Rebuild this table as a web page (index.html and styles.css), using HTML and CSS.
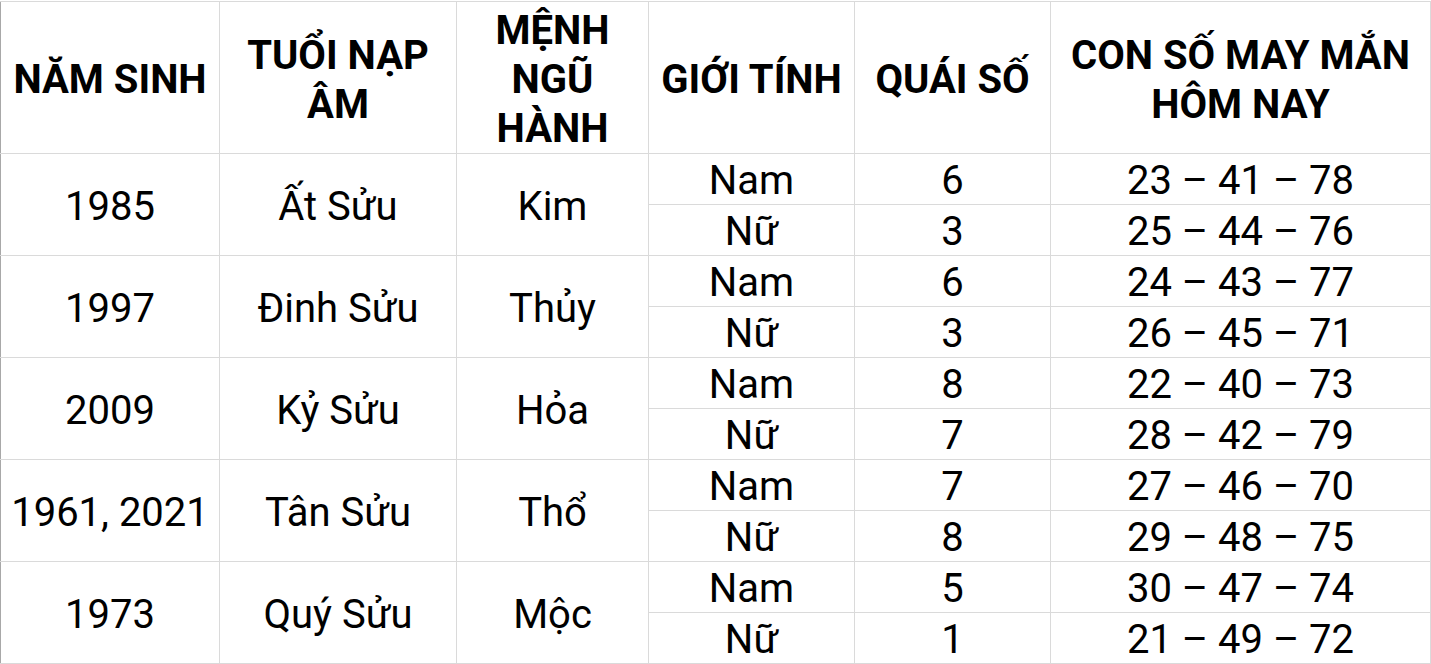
FILE: index.html
```html
<!DOCTYPE html>
<html lang="vi">
<head>
<meta charset="utf-8">
<title>Con số may mắn hôm nay</title>
<link rel="stylesheet" href="styles.css">
</head>
<body>
<table class="lucky">
  <colgroup>
    <col class="c1"><col class="c2"><col class="c3"><col class="c4"><col class="c5"><col class="c6">
  </colgroup>
  <thead>
    <tr class="head">
      <th>NĂM SINH</th>
      <th>TUỔI NẠP<br>ÂM</th>
      <th>MỆNH<br>NGŨ<br>HÀNH</th>
      <th>GIỚI TÍNH</th>
      <th>QUÁI SỐ</th>
      <th>CON SỐ MAY MẮN<br>HÔM NAY</th>
    </tr>
  </thead>
  <tbody>
    <tr><td rowspan="2">1985</td><td rowspan="2">Ất Sửu</td><td rowspan="2">Kim</td><td>Nam</td><td>6</td><td>23 – 41 – 78</td></tr>
    <tr><td>Nữ</td><td>3</td><td>25 – 44 – 76</td></tr>
    <tr><td rowspan="2">1997</td><td rowspan="2">Đinh Sửu</td><td rowspan="2">Thủy</td><td>Nam</td><td>6</td><td>24 – 43 – 77</td></tr>
    <tr><td>Nữ</td><td>3</td><td>26 – 45 – 71</td></tr>
    <tr><td rowspan="2">2009</td><td rowspan="2">Kỷ Sửu</td><td rowspan="2">Hỏa</td><td>Nam</td><td>8</td><td>22 – 40 – 73</td></tr>
    <tr><td>Nữ</td><td>7</td><td>28 – 42 – 79</td></tr>
    <tr><td rowspan="2">1961, 2021</td><td rowspan="2">Tân Sửu</td><td rowspan="2">Thổ</td><td>Nam</td><td>7</td><td>27 – 46 – 70</td></tr>
    <tr><td>Nữ</td><td>8</td><td>29 – 48 – 75</td></tr>
    <tr><td rowspan="2">1973</td><td rowspan="2">Quý Sửu</td><td rowspan="2">Mộc</td><td>Nam</td><td>5</td><td>30 – 47 – 74</td></tr>
    <tr><td>Nữ</td><td>1</td><td>21 – 49 – 72</td></tr>
  </tbody>
</table>
</body>
</html>
```
FILE: styles.css
```css
html, body {
  margin: 0;
  padding: 0;
  background: #ffffff;
}
body {
  padding-top: 1px;
  font-family: Roboto, "Liberation Sans", sans-serif;
  color: #000;
}
.lucky {
  border-collapse: collapse;
  table-layout: fixed;
  width: 1430px;
  border-left: 1px solid #a8a8a8;
}
.c1 { width: 219px; }
.c2 { width: 237px; }
.c3 { width: 192px; }
.c4 { width: 206px; }
.c5 { width: 196px; }
.c6 { width: 380px; }
.lucky th, .lucky td {
  border: 1px solid #dadada;
  padding: 4px 4px 0;
  text-align: center;
  vertical-align: middle;
  font-size: 40px;
  white-space: nowrap;
}
.lucky td:first-child { border-left-color: #a8a8a8; }
.lucky th:first-child { border-left-color: #a8a8a8; }
.lucky th {
  font-weight: 700;
  line-height: 49px;
  height: 147px;
}
.lucky td {
  font-weight: 400;
  line-height: 46px;
  height: 46px;
}
```
